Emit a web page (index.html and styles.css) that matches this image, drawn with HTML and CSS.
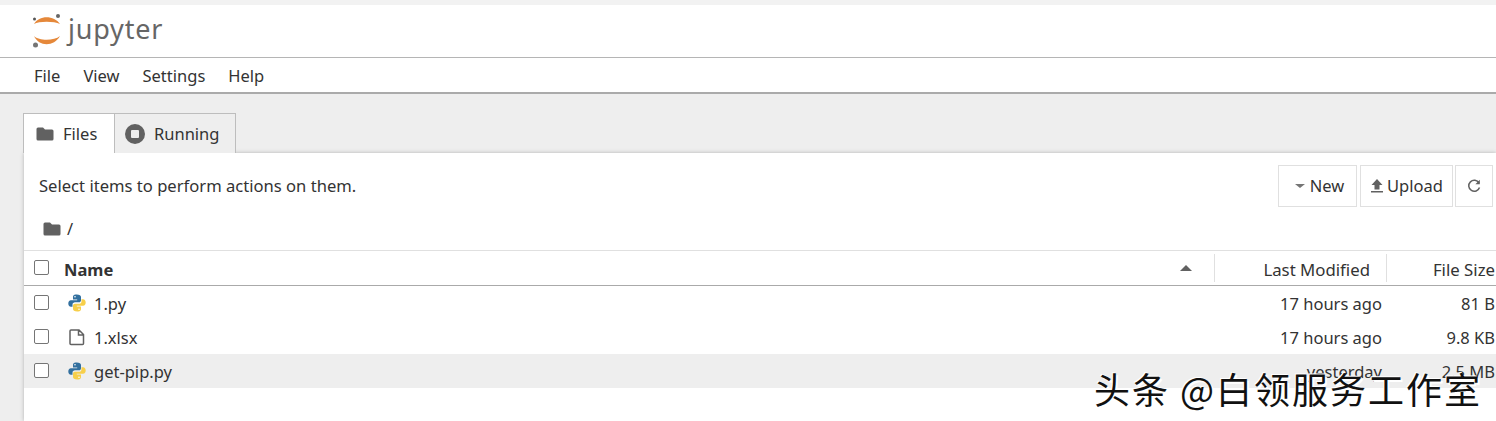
FILE: index.html
```html
<!DOCTYPE html>
<html lang="en">
<head>
    <meta charset="UTF-8">
    <meta name="viewport" content="width=device-width, initial-scale=1.0">
    <title>Jupyter</title>
    <link rel="stylesheet" href="styles.css">
</head>
<body>
    <div class="top-strip"></div>
    <header class="header">
        <svg class="logo-mark" viewBox="0 0 32 36" width="32" height="36">
            <path d="M3 11 C8 2 23 2 29 11 C23 8 8 8 3 11 Z" fill="#e5883a"/>
            <path d="M3 23 C8 34 23 34 29 23 C23 28 8 28 3 23 Z" fill="#e5883a"/>
            <circle cx="27" cy="3" r="2" fill="#666"/>
            <circle cx="3.500" cy="6" r="1.500" fill="#555"/>
            <circle cx="4.500" cy="32" r="2.500" fill="#757575"/>
        </svg>
        <span class="logo-text">jupyter</span>
    </header>
    <nav class="menu">
        <span>File</span>
        <span>View</span>
        <span>Settings</span>
        <span>Help</span>
    </nav>
    <main class="main">
        <div class="tabs">
            <div class="tab active">
                <svg class="icon" viewBox="0 0 18 16" width="18" height="16"><path d="M2 1.500 h5 l2 2 h7 a1.500 1.500 0 0 1 1.500 1.500 v8 a1.500 1.500 0 0 1 -1.500 1.500 h-14 a1.500 1.500 0 0 1 -1.500 -1.500 v-10 a1.500 1.500 0 0 1 1.500 -1.500 z" fill="#616161"/></svg>
                Files
            </div>
            <div class="tab">
                <svg class="icon" viewBox="0 0 20 20" width="20" height="20"><circle cx="10" cy="10" r="10" fill="#616161"/><rect x="6" y="6" width="8" height="8" rx="1" fill="#eee"/></svg>
                Running
            </div>
        </div>
        <section class="panel">
            <div class="toolbar">
                <span class="hint">Select items to perform actions on them.</span>
                <div class="buttons">
                    <button class="btn btn-new"><span class="caret"></span>New</button>
                    <button class="btn btn-upload">
                        <svg viewBox="0 0 14 16" width="14" height="16"><path d="M7 1 L12.500 7 H9.500 V11.500 H4.500 V7 H1.500 Z M1 13 H13 V14.500 H1 Z" fill="#616161"/></svg>Upload
                    </button>
                    <button class="btn btn-refresh">
                        <svg viewBox="0 0 16 16" width="16" height="16"><path d="M13 5 A5.500 5.500 0 1 0 13.500 9.500" fill="none" stroke="#616161" stroke-width="1.500"/><path d="M13.800 1.800 V6.200 H9.400 Z" fill="#616161"/></svg>
                    </button>
                </div>
            </div>
            <div class="crumbs">
                <svg class="icon" viewBox="0 0 18 16" width="18" height="16"><path d="M2 1.500 h5 l2 2 h7 a1.500 1.500 0 0 1 1.500 1.500 v8 a1.500 1.500 0 0 1 -1.500 1.500 h-14 a1.500 1.500 0 0 1 -1.500 -1.500 v-10 a1.500 1.500 0 0 1 1.500 -1.500 z" fill="#616161"/></svg>
                <span>/</span>
            </div>
            <div class="list-head">
                <span class="check"></span>
                <span class="col-name head-name">Name</span>
                <span class="sort-up"></span>
                <span class="col-date head-col">Last Modified</span>
                <span class="col-size head-col">File Size</span>
            </div>
            <div class="row">
                <span class="check"></span>
                <svg class="file-icon" viewBox="0 0 18 18" width="18" height="18"><use href="#py"/></svg>
                <span class="col-name">1.py</span>
                <span class="col-date">17 hours ago</span>
                <span class="col-size">81 B</span>
            </div>
            <div class="row">
                <span class="check"></span>
                <svg class="file-icon" viewBox="0 0 18 18" width="18" height="18"><path d="M3 2 h8 l4.500 4.500 v9 a1 1 0 0 1 -1 1 h-11.500 a1 1 0 0 1 -1 -1 v-12.500 a1 1 0 0 1 1 -1 z M10.500 2 v5 h5" fill="none" stroke="#616161" stroke-width="1.500"/></svg>
                <span class="col-name">1.xlsx</span>
                <span class="col-date">17 hours ago</span>
                <span class="col-size">9.8 KB</span>
            </div>
            <div class="row selected">
                <span class="check"></span>
                <svg class="file-icon" viewBox="0 0 18 18" width="18" height="18"><use href="#py"/></svg>
                <span class="col-name">get-pip.py</span>
                <span class="col-date">yesterday</span>
                <span class="col-size">2.5 MB</span>
            </div>
        </section>
    </main>
    <div class="watermark">头条 @白领服务工作室</div>
    <svg class="defs" width="0" height="0">
        <defs>
            <g id="py">
                <path d="M8.800 .500 C5 .500 5 2 5 3.500 V5.500 H9.200 V6.300 H3 C1.200 6.300 .300 7.800 .300 9.500 C.300 11.200 1.200 12.800 3 12.800 H4.500 V10.600 C4.500 9.200 5.600 8.300 7 8.300 H11 C12.200 8.300 13 7.400 13 6.200 V3 C13 1.500 11.500 .500 8.800 .500 Z" fill="#33709f"/>
                <path d="M9.200 17.500 C13 17.500 13 16 13 14.500 V12.500 H8.800 V11.700 H15 C16.800 11.700 17.700 10.200 17.700 8.500 C17.700 6.800 16.800 5.200 15 5.200 H13.500 V7.400 C13.500 8.800 12.400 9.700 11 9.700 H7 C5.800 9.700 5 10.600 5 11.800 V15 C5 16.500 6.500 17.500 9.200 17.500 Z" fill="#f7cf4a"/>
                <circle cx="7" cy="2.800" r=".8" fill="#fff"/>
                <circle cx="11" cy="15.200" r=".8" fill="#fff"/>
            </g>
        </defs>
    </svg>
</body>
</html>
```

FILE: styles.css
```css
* {
    box-sizing: border-box;
}
body {
    margin: 0;
    height: 421px;
    overflow: hidden;
    position: relative;
    font-family: "Noto Sans", "Open Sans", sans-serif;
    font-size: 16.5px;
    color: #333;
    background: #eee;
}
.top-strip {
    height: 5px;
    background: #f2f2f2;
}
.header {
    height: 53px;
    background: #fff;
    border-bottom: 1px solid #b5b5b5;
    display: flex;
    align-items: center;
    padding-left: 31px;
    gap: 5px;
}
.logo-mark {
    flex: none;
}
.logo-text {
    font-size: 27px;
    color: #666;
    letter-spacing: .8px;
    line-height: 1;
    margin-top: -6px;
}
.menu {
    height: 36px;
    background: #fff;
    border-bottom: 2px solid #aaa;
    display: flex;
    align-items: center;
    gap: 23px;
    padding-left: 34px;
    color: #333;
}
.main {
    padding: 19px 0 0 23px;
}
.tabs {
    display: flex;
    height: 40px;
}
.tab {
    display: flex;
    align-items: center;
    gap: 9px;
    height: 40px;
    padding: 0 16px 0 10px;
    border: 1px solid #bdbdbd;
    border-bottom: none;
    background: #eee;
}
.tab.active {
    width: 91px;
    background: #fff;
    position: relative;
    z-index: 1;
    padding-left: 12px;
    border-right: none;
}
.icon {
    flex: none;
}
.panel {
    background: #fff;
    margin-left: 1px;
    height: 268px;
    box-shadow: 0 0 4px rgba(0,0,0,0.25);
}
.toolbar {
    display: flex;
    align-items: center;
    justify-content: space-between;
    height: 54px;
    padding: 11px 3px 0 15px;
}
.hint {
    font-size: 16.6px;
}
.buttons {
    display: flex;
    gap: 3px;
}
.btn {
    height: 42px;
    background: #fff;
    border: 1px solid #e0e0e0;
    font: inherit;
    color: #333;
    display: flex;
    align-items: center;
    justify-content: center;
    padding: 0;
}
.btn-new {
    width: 79px;
    gap: 5px;
    padding-left: 4px;
}
.btn-upload {
    width: 93px;
    gap: 3px;
    margin-right: -1px;
}
.btn-refresh {
    width: 38px;
}
.caret {
    width: 0;
    height: 0;
    border-left: 5px solid transparent;
    border-right: 5px solid transparent;
    border-top: 4px solid #757575;
}
.crumbs {
    display: flex;
    align-items: center;
    gap: 6px;
    height: 44px;
    padding-left: 19px;
    border-bottom: 1px solid #e0e0e0;
}
.list-head,
.row {
    display: flex;
    align-items: center;
    padding-left: 10px;
}
.list-head {
    height: 35px;
    border-bottom: 1px solid #aaa;
}
.row {
    height: 34px;
}
.row.selected {
    background: #eee;
}
.check {
    flex: none;
    width: 15px;
    height: 15px;
    border: 1px solid #757575;
    border-radius: 2px;
    background: #fff;
    margin: 0 20px 2px 0;
}
.list-head .check {
    margin-right: 15px;
}
.file-icon {
    flex: none;
    margin-right: 8px;
    margin-left: -1px;
}
.col-name {
    flex: 1;
}
.head-name {
    font-weight: 700;
    padding-top: 2px;
}
.sort-up {
    width: 0;
    height: 0;
    border-left: 6px solid transparent;
    border-right: 6px solid transparent;
    border-bottom: 6px solid #616161;
    margin-right: 22px;
}
.col-date {
    width: 171px;
    text-align: right;
    padding-right: 4px;
}
.col-size {
    width: 110px;
    text-align: right;
    padding-right: 1px;
}
.head-col {
    height: 28px;
    padding-top: 4px;
    line-height: 24px;
    border-left: 1px solid #e0e0e0;
    padding-right: 16px;
    font-size: 16.8px;
}
.head-col.col-date {
    width: 172px;
}
.head-col.col-size {
    padding-right: 1px;
}
.watermark {
    position: absolute;
    left: 1094px;
    top: 366px;
    font-family: "Noto Sans CJK SC", sans-serif;
    font-size: 36px;
    letter-spacing: 2px;
    line-height: 44px;
    color: #111;
    white-space: nowrap;
    text-shadow: 2px 2px 0 #fff, -1px -1px 0 #fff;
}
.defs {
    position: absolute;
}
```
